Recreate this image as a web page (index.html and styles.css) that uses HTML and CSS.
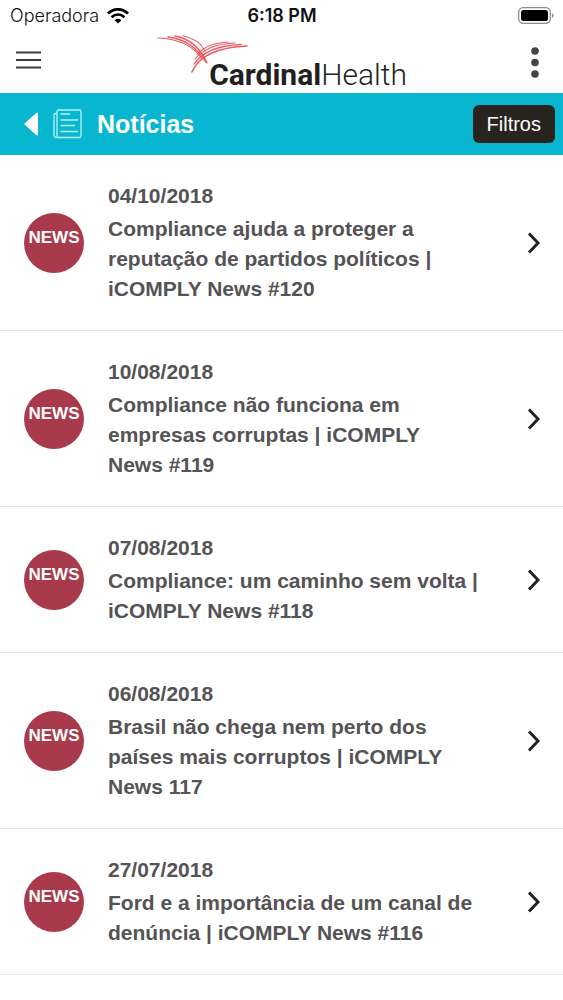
FILE: index.html
```html
<!DOCTYPE html>
<html lang="pt-BR">
<head>
  <meta charset="UTF-8">
  <meta name="viewport" content="width=device-width, initial-scale=1">
  <title>Notícias</title>
  <link rel="stylesheet" href="styles.css">
</head>
<body>

  <!-- Barra de status -->
  <div class="status">
    <div class="carrier">
      <span>Operadora</span>
      <svg width="22" height="16" viewBox="0 0 22 16">
        <path d="M1 5.6C6.600 -.1 15.400 -.1 21 5.600" fill="none" stroke="#000" stroke-width="2.800"/>
        <path d="M4.600 9.200C8.300 5.600 13.700 5.600 17.400 9.200" fill="none" stroke="#000" stroke-width="2.600"/>
        <path d="M11 15.600L7.600 12.200Q11 9.400 14.400 12.200Z"/>
      </svg>
    </div>
    <span class="time">6:18 PM</span>
    <div class="battery">
      <svg width="36" height="17" viewBox="0 0 36 17">
        <rect x=".7" y=".7" width="31.600" height="15.600" rx="4.500" fill="#fff" stroke="#8e8e8e" stroke-width="1.300"/>
        <rect x="3" y="3" width="27" height="11" rx="2.500"/>
        <path d="M34 6Q35.600 7 35.600 8.500T34 11Z" fill="#8e8e8e"/>
      </svg>
    </div>
  </div>

  <!-- Cabeçalho -->
  <header class="top">
    <button class="icon-btn menu" aria-label="Menu">
      <svg width="25" height="18" viewBox="0 0 25 18" stroke="#3d3a3b" stroke-width="2">
        <path d="M0 1.500H25M0 9H25M0 16.500H25"/>
      </svg>
    </button>
    <div class="logo">
      <svg class="wings" width="92" height="40" viewBox="0 0 92 40" fill="none" stroke="#ea5a62" stroke-linecap="round">
        <path d="M1 3Q32 4 45 24" stroke-width="1.200"/>
        <path d="M11 2Q36 5 49 27.500" stroke-width="1.300"/>
        <path d="M18 1Q40 5 50 28" stroke-width="1.300"/>
        <path d="M26 .8Q42 4 48 16" stroke-width="1.100"/>
        <path d="M40 19.500Q50 8 71 7" stroke-width="1.100"/>
        <path d="M38 24Q50 9 78 8" stroke-width="1.200"/>
        <path d="M37 29Q49 11 84 9.500" stroke-width="1.300"/>
        <path d="M35 37Q45 13 90 11" stroke-width="1.600"/>
      </svg>
      <span class="brand"><b>Cardinal</b>Health</span>
    </div>
    <button class="icon-btn more" aria-label="Mais opções">
      <svg width="8" height="31" viewBox="0 0 8 31" fill="#444">
        <circle cx="4" cy="4" r="3.800"/>
        <circle cx="4" cy="15.500" r="3.800"/>
        <circle cx="4" cy="27" r="3.800"/>
      </svg>
    </button>
  </header>

  <!-- Título da seção -->
  <div class="section">
    <button class="icon-btn" aria-label="Voltar">
      <svg width="14" height="24" viewBox="0 0 14 24" fill="#fff"><path d="M0 12L12.500 .7Q14 0 14 1.500V22.500Q14 24 12.500 23.300Z"/></svg>
    </button>
    <svg class="paper" width="29" height="30" viewBox="0 0 29 30" fill="none" stroke="#b9f1f6" stroke-width="1.300">
      <rect x="4" y="1" width="24" height="27.500" rx="1.500"/>
      <path d="M4 4.500H2.500Q1 4.500 1 6V26Q1 28.500 3.500 28.500H7M7.500 5H17M7.500 11H25M7.500 16.500H22M7.500 22.500H25"/>
    </svg>
    <h1>Notícias</h1>
    <button class="filter">Filtros</button>
  </div>

  <!-- Lista de notícias -->
  <main class="list">
    <a class="item" href="#">
      <span class="badge">NEWS</span>
      <span class="text">
        <time datetime="2018-10-04">04/10/2018</time>
        <span class="title">Compliance ajuda a proteger a reputação de partidos políticos | iCOMPLY News&nbsp;#120</span>
      </span>
      <svg class="arrow" width="14" height="22" viewBox="0 0 14 22"><path d="M2 1.500L11 11L2 20.500"/></svg>
    </a>
    <a class="item" href="#">
      <span class="badge">NEWS</span>
      <span class="text">
        <time datetime="2018-08-10">10/08/2018</time>
        <span class="title">Compliance não funciona em empresas corruptas | iCOMPLY News&nbsp;#119</span>
      </span>
      <svg class="arrow" width="14" height="22" viewBox="0 0 14 22"><path d="M2 1.500L11 11L2 20.500"/></svg>
    </a>
    <a class="item" href="#">
      <span class="badge">NEWS</span>
      <span class="text">
        <time datetime="2018-08-07">07/08/2018</time>
        <span class="title">Compliance: um caminho sem volta | iCOMPLY News&nbsp;#118</span>
      </span>
      <svg class="arrow" width="14" height="22" viewBox="0 0 14 22"><path d="M2 1.500L11 11L2 20.500"/></svg>
    </a>
    <a class="item" href="#">
      <span class="badge">NEWS</span>
      <span class="text">
        <time datetime="2018-08-06">06/08/2018</time>
        <span class="title">Brasil não chega nem perto dos países mais corruptos | iCOMPLY News&nbsp;117</span>
      </span>
      <svg class="arrow" width="14" height="22" viewBox="0 0 14 22"><path d="M2 1.500L11 11L2 20.500"/></svg>
    </a>
    <a class="item" href="#">
      <span class="badge">NEWS</span>
      <span class="text">
        <time datetime="2018-07-27">27/07/2018</time>
        <span class="title">Ford e a importância de um canal de denúncia | iCOMPLY News&nbsp;#116</span>
      </span>
      <svg class="arrow" width="14" height="22" viewBox="0 0 14 22"><path d="M2 1.500L11 11L2 20.500"/></svg>
    </a>
  </main>

</body>
</html>
```
FILE: styles.css
```css
* {
  box-sizing: border-box;
}

body {
  margin: 0;
  background: #fff;
  color: #545355;
  font-family: "Liberation Sans", Arial, sans-serif;
}

button {
  border: none;
  cursor: pointer;
  font-family: inherit;
}

svg {
  display: block;
  flex: none;
}

.status {
  display: grid;
  grid-template-columns: 1fr auto 1fr;
  align-items: center;
  height: 31px;
  padding: 0 9px 0 10px;
  color: #111;
  font-family: Inter, sans-serif;
  font-size: 18px;
}

.carrier {
  display: flex;
  align-items: center;
  gap: 8px;
  font-weight: 300;
}

.time {
  font-weight: 600;
}

.battery {
  display: flex;
  justify-content: flex-end;
}

.top {
  display: flex;
  justify-content: space-between;
  align-items: center;
  height: 62px;
  padding: 0 16px;
}

.icon-btn {
  background: none;
  padding: 0;
}

.menu {
  padding-bottom: 4px;
}

.more {
  display: flex;
  justify-content: center;
  width: 24px;
}

.logo {
  position: relative;
  align-self: stretch;
  display: flex;
  align-items: flex-end;
  padding-left: 52px;
}

/* as asas ficam por cima do nome */
.wings {
  position: absolute;
  left: 0;
  top: 4px;
}

.brand {
  color: #231f20;
  font-family: Roboto, sans-serif;
  font-size: 30px;
  font-weight: 300;
  line-height: 36px;
}

.brand b {
  font-weight: 700;
}

.section {
  display: flex;
  align-items: center;
  height: 62px;
  padding: 0 8px 0 24px;
  background: #08b7cf;
}

.paper {
  margin: 0 15px;
}

h1 {
  flex: 1;
  margin: 0;
  color: #fff;
  font-size: 25px;
}

.filter {
  height: 38px;
  padding: 0 14px;
  border-radius: 6px;
  background: #282420;
  color: #fff;
  font-size: 20px;
}

.item {
  display: flex;
  align-items: center;
  padding: 26px 22px 26px 24px;
  border-bottom: 1px solid #e3e3e3;
  color: inherit;
  text-decoration: none;
}

.badge {
  flex: none;
  width: 60px;
  height: 60px;
  margin-right: 24px;
  border-radius: 50%;
  background: #a93a4b;
  color: #fff;
  font-size: 17px;
  font-weight: bold;
  line-height: 50px;
  text-align: center;
}

.text {
  flex: 1;
  margin-right: 40px;
  font-size: 21px;
  font-weight: bold;
  line-height: 30px;
}

.text time,
.text .title {
  display: block;
}

.text time {
  margin-bottom: 3px;
}

.arrow {
  fill: none;
  stroke: #222;
  stroke-width: 3;
}
```
